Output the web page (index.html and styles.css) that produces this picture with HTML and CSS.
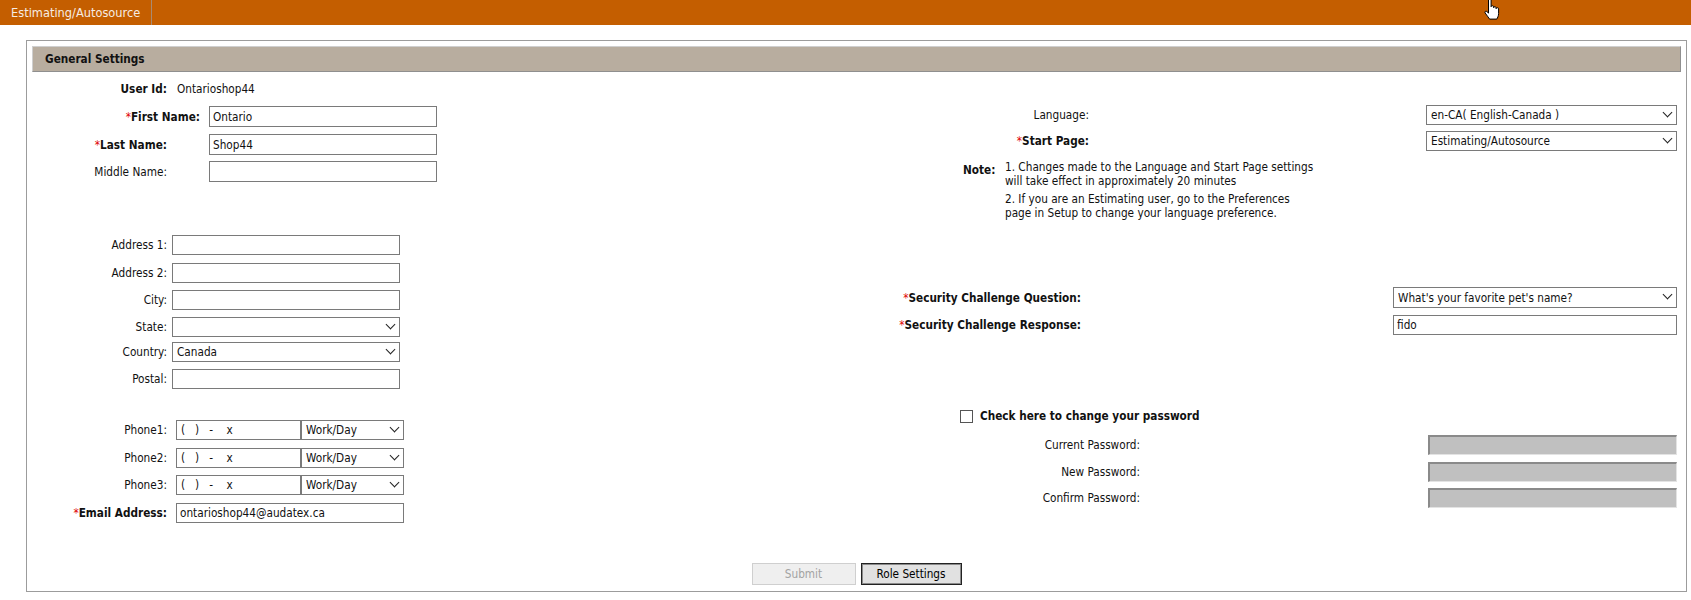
FILE: index.html
```html
<!DOCTYPE html>
<html>
<head>
<meta charset="utf-8">
<title>General Settings</title>
<link rel="stylesheet" href="styles.css">
</head>
<body>
<div class="topbar">
  <div class="tab">Estimating/Autosource</div>
  <svg class="cursor" width="20" height="24" viewBox="0 0 20 24"><path d="M5.5 2.5c0-1.4 2.6-1.4 2.6 0v7.2c0-1.3 2.5-1.3 2.5 0v1c0-1.3 2.5-1.3 2.5 0v1c0-1.3 2.5-1.3 2.5 0v4.8c0 2.6-1.2 4.4-1.8 5.6H6.6c-1.2-2-3-3.8-4.5-6.2-.7-1.2.6-2.3 1.7-1.4l1.7 1.6z" fill="#fff" stroke="#000" stroke-width="1" stroke-linejoin="round"/></svg>
</div>

<div class="panel">
  <div class="panel-head">General Settings</div>
  <div class="panel-body">
    <div class="col-left">
      <div class="row mt7"><span class="lab b w140">User Id:</span><span class="val">Ontarioshop44</span></div>
      <div class="row mt7 h21"><span class="lab b w173"><span class="req">*</span>First Name:</span><input class="txt ml9 w228" value="Ontario"></div>
      <div class="row mt7 h21"><span class="lab b w140"><span class="req">*</span>Last Name:</span><input class="txt ml42 w228" value="Shop44"></div>
      <div class="row mt6 h21"><span class="lab w140">Middle Name:</span><input class="txt ml42 w228" value=""></div>

      <div class="row mt53"><span class="lab w140">Address 1:</span><input class="txt ml5 w228" value=""></div>
      <div class="row mt8"><span class="lab w140">Address 2:</span><input class="txt ml5 w228" value=""></div>
      <div class="row mt7"><span class="lab w140">City:</span><input class="txt ml5 w228" value=""></div>
      <div class="row mt7"><span class="lab w140">State:</span><span class="sel ml5 w228"><select><option></option></select></span></div>
      <div class="row mt5"><span class="lab w140">Country:</span><span class="sel ml5 w228"><select><option>Canada</option></select></span></div>
      <div class="row mt7"><span class="lab w140">Postal:</span><input class="txt ml5 w228" value=""></div>

      <div class="row mt31"><span class="lab w140">Phone1:</span><input class="txt ml9 w125 phone" value="(&nbsp;&nbsp;&nbsp;)&nbsp;&nbsp;&nbsp;-&nbsp;&nbsp;&nbsp;&nbsp;x"><span class="sel w103"><select><option>Work/Day</option></select></span></div>
      <div class="row mt8"><span class="lab w140">Phone2:</span><input class="txt ml9 w125 phone" value="(&nbsp;&nbsp;&nbsp;)&nbsp;&nbsp;&nbsp;-&nbsp;&nbsp;&nbsp;&nbsp;x"><span class="sel w103"><select><option>Work/Day</option></select></span></div>
      <div class="row mt7"><span class="lab w140">Phone3:</span><input class="txt ml9 w125 phone" value="(&nbsp;&nbsp;&nbsp;)&nbsp;&nbsp;&nbsp;-&nbsp;&nbsp;&nbsp;&nbsp;x"><span class="sel w103"><select><option>Work/Day</option></select></span></div>
      <div class="row mt8"><span class="lab b w140"><span class="req">*</span>Email Address:</span><input class="txt ml9 w228" value="ontarioshop44@audatex.ca"></div>
    </div>

    <div class="col-right">
      <div class="row mt33"><span class="lab w239">Language:</span><span class="sel push w251"><select><option>en-CA( English-Canada )</option></select></span></div>
      <div class="row mt6"><span class="lab b w239"><span class="req">*</span>Start Page:</span><span class="sel push w251"><select><option>Estimating/Autosource</option></select></span></div>
      <div class="note">
        <span class="note-lab">Note:</span>
        <div class="note-text">
          <p>1. Changes made to the Language and Start Page settings<br>will take effect in approximately 20 minutes</p>
          <p>2. If you are an Estimating user, go to the Preferences<br>page in Setup to change your language preference.</p>
        </div>
      </div>
      <div class="row mt67 h21"><span class="lab b w231"><span class="req">*</span>Security Challenge Question:</span><span class="sel push w284"><select><option>What's your favorite pet's name?</option></select></span></div>
      <div class="row mt7"><span class="lab b w231"><span class="req">*</span>Security Challenge Response:</span><input class="txt push w284" value="fido"></div>
      <div class="row mt71 check-row"><input type="checkbox" class="chk"><span class="b chk-lab">Check here to change your password</span></div>
      <div class="row mt9"><span class="lab w290">Current Password:</span><input class="pw push w249" type="password" disabled></div>
      <div class="row mt7"><span class="lab w290">New Password:</span><input class="pw push w249" type="password" disabled></div>
      <div class="row mt6"><span class="lab w290">Confirm Password:</span><input class="pw push w249" type="password" disabled></div>
    </div>
  </div>
  <div class="buttons">
    <button class="btn btn-submit" disabled>Submit</button>
    <button class="btn btn-role">Role Settings</button>
  </div>
</div>
</body>
</html>
```

FILE: styles.css
```css
* { box-sizing: border-box; }
html, body { margin: 0; padding: 0; background: #fff; }
body {
  font-family: "DejaVu Sans Condensed", "DejaVu Sans", sans-serif;
  font-size: 11.7px;
  color: #111;
}

.topbar {
  position: relative;
  height: 25px;
  background: #c45e00;
  display: flex;
}
.tab {
  width: 152px;
  padding-left: 11px;
  line-height: 25px;
  font-size: 12.7px;
  color: #f6ece3;
  border-right: 1px solid #a88a72;
  white-space: nowrap;
}
.cursor { position: absolute; left: 1483px; top: -3px; }

.panel {
  margin: 15px 0 0 26px;
  width: 1661px;
  border: 1px solid #9c9c9c;
  padding: 5px 5px 6px;
}
.panel-head {
  height: 26px;
  line-height: 25px;
  background: #b8ad9f;
  border: 1px solid #8f8f8f;
  border-top-color: #cfcfcf;
  border-left-color: #cfcfcf;
  padding-left: 12px;
  font-weight: bold;
  color: #111;
}
.panel-body {
  display: flex;
  margin: 0 -5px;
  height: 451px;
}
.col-left { width: 823px; }
.col-right { flex: 1; padding-right: 9px; }

.row { display: flex; align-items: center; height: 20px; }
.h21 { height: 21px; }
.lab { text-align: right; white-space: nowrap; flex: none; }
.b { font-weight: bold; }
.req { color: #e00000; font-weight: normal; }
.val { margin-left: 10px; }
.push { margin-left: auto; }

.w140 { width: 140px; } .w173 { width: 173px; } .w231 { width: 231px; }
.w239 { width: 239px; } .w290 { width: 290px; }
.w228 { width: 228px; } .w125 { width: 125px; } .w103 { width: 103px; }
.w251 { width: 251px; } .w284 { width: 284px; } .w249 { width: 249px; }
.ml5 { margin-left: 5px; } .ml9 { margin-left: 9px; } .ml42 { margin-left: 42px; }
.mt5 { margin-top: 5px; } .mt6 { margin-top: 6px; } .mt7 { margin-top: 7px; }
.mt8 { margin-top: 8px; } .mt9 { margin-top: 9px; } .mt31 { margin-top: 31px; }
.mt33 { margin-top: 33px; } .mt53 { margin-top: 53px; } .mt67 { margin-top: 67px; }
.mt71 { margin-top: 71px; }

.txt, .sel select {
  height: 100%;
  border: 1px solid #7a7a7a;
  background: #fff;
  font: inherit;
  color: #111;
  padding: 0 0 0 3px;
  margin-top: 0; margin-bottom: 0;
  border-radius: 0;
  outline: none;
}
.txt { flex: none; }
.phone { padding-left: 4px; }
.sel { position: relative; height: 100%; flex: none; }
.sel select {
  width: 100%;
  -webkit-appearance: none;
  appearance: none;
  padding-left: 4px;
}
.sel::after {
  content: "";
  position: absolute;
  right: 6px;
  top: 4px;
  width: 6px;
  height: 6px;
  border-right: 1.6px solid #222;
  border-bottom: 1.6px solid #222;
  transform: rotate(45deg);
  pointer-events: none;
}

.note { display: flex; margin-top: 9px; padding-left: 113px; line-height: 14px; }
.note-lab { width: 42px; font-weight: bold; padding-top: 3px; }
.note-text p { margin: 0 0 4px; }
.note-text p:last-child { margin-bottom: 0; }

.check-row { padding-left: 110px; }
.chk {
  -webkit-appearance: none;
  appearance: none;
  width: 13px; height: 13px;
  margin: 0 7px 0 0;
  border: 1px solid #555;
  background: #fff;
  border-radius: 0;
}
.pw {
  height: 100%;
  flex: none;
  background: #c0c0c0;
  border: 1px solid #e3e3e3;
  border-top: 2px solid #8a8a8a;
  border-left: 2px solid #8a8a8a;
  border-radius: 0;
  padding: 0;
}

.buttons { display: flex; justify-content: center; gap: 5px; margin-top: 40px; }
.btn {
  height: 22px;
  font: inherit;
  border-radius: 0;
  padding: 0;
}
.btn-submit { width: 104px; background: #efefef; border: 1px solid #cfcfcf; color: #a3a3a3; }
.btn-role { width: 101px; background: #e1e1e1; border: 1px solid #222; box-shadow: inset 0 0 0 1px #8a8a8a; color: #000; }
```
